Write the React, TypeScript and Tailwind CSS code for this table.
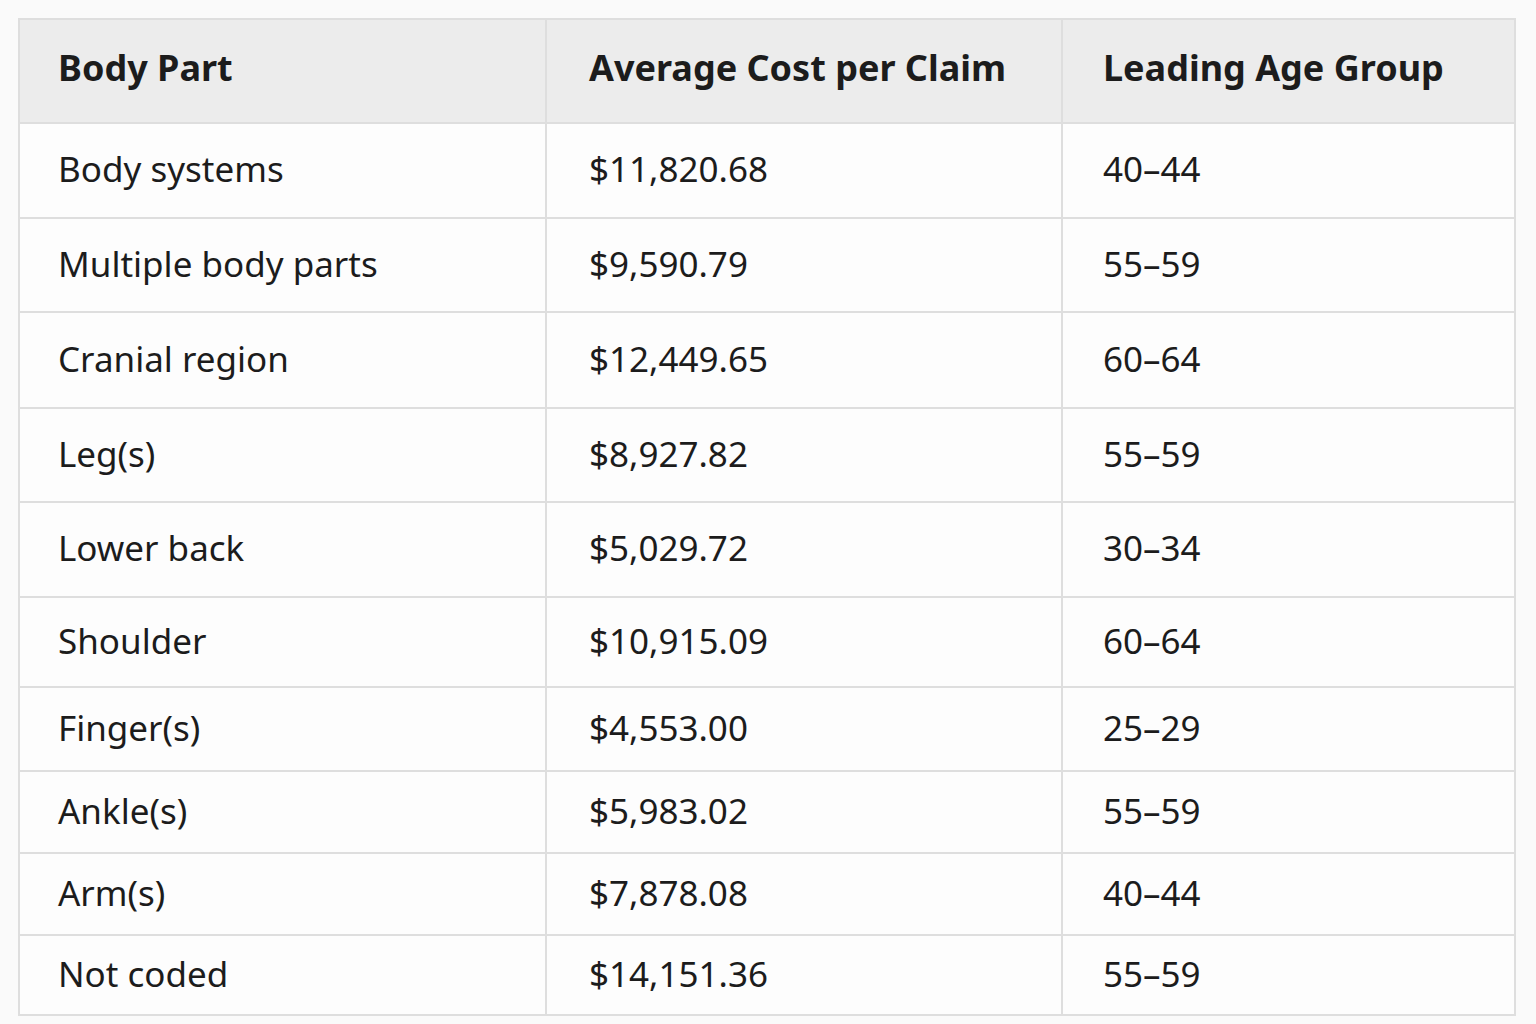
import React from 'react';

const rows: [string, string, string, string][] = [
  ['Body systems', '$11,820.68', '40–44', 'h-[95px]'],
  ['Multiple body parts', '$9,590.79', '55–59', 'h-[94px]'],
  ['Cranial region', '$12,449.65', '60–64', 'h-[96px]'],
  ['Leg(s)', '$8,927.82', '55–59', 'h-[94px]'],
  ['Lower back', '$5,029.72', '30–34', 'h-[95px]'],
  ['Shoulder', '$10,915.09', '60–64', 'h-[90px]'],
  ['Finger(s)', '$4,553.00', '25–29', 'h-[84px]'],
  ['Ankle(s)', '$5,983.02', '55–59', 'h-[82px]'],
  ['Arm(s)', '$7,878.08', '40–44', 'h-[82px]'],
  ['Not coded', '$14,151.36', '55–59', 'h-[80px]'],
];

const App = () => {
  return (
    <div className="min-h-screen w-full bg-[#fafafa] pt-[18px] pl-[18px] font-['Noto_Sans',sans-serif] text-[#1c1c1c]">
      <table className="w-[1498px] table-fixed border-collapse border-2 border-[#dedede] bg-[#fdfdfd]">
        <colgroup>
          <col className="w-[527px]" />
          <col className="w-[516px]" />
          <col />
        </colgroup>
        <thead>
          <tr className="h-[104px] bg-[#ececec]">
            <th className="border-2 border-[#dedede] pb-[6px] pl-[38px] text-left text-[36px] font-bold">Body Part</th>
            <th className="border-2 border-[#dedede] pb-[6px] pl-[42px] text-left text-[36px] font-bold">Average Cost per Claim</th>
            <th className="border-2 border-[#dedede] pb-[6px] pl-[40px] text-left text-[36px] font-bold">Leading Age Group</th>
          </tr>
        </thead>
        <tbody>
          {rows.map(([part, cost, age, h]) => (
            <tr key={part} className={h}>
              <td className="border-2 border-[#dedede] pb-[2px] pl-[38px] text-[35px]">{part}</td>
              <td className="border-2 border-[#dedede] pb-[2px] pl-[42px] text-[35px]">{cost}</td>
              <td className="border-2 border-[#dedede] pb-[2px] pl-[40px] text-[35px]">{age}</td>
            </tr>
          ))}
        </tbody>
      </table>
    </div>
  );
};

export default App;
